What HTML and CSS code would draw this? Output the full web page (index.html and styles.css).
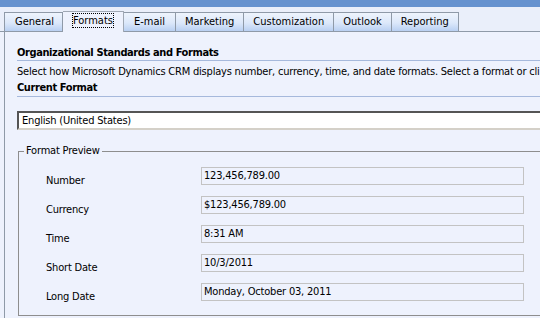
FILE: index.html
```html
<!DOCTYPE html>
<html lang="en">
<head>
    <meta charset="UTF-8">
    <title>System Settings - Formats</title>
    <link rel="stylesheet" href="styles.css">
</head>
<body>
    <div class="topbar"></div>

    <div class="tabstrip">
        <div class="tab">General</div>
        <div class="tab active"><span class="focus">Formats</span></div>
        <div class="tab">E-mail</div>
        <div class="tab">Marketing</div>
        <div class="tab">Customization</div>
        <div class="tab">Outlook</div>
        <div class="tab">Reporting</div>
    </div>

    <div class="content">
        <h3 class="section-title">Organizational Standards and Formats</h3>
        <p class="desc">Select how Microsoft Dynamics CRM displays number, currency, time, and date formats. Select a format or cli</p>
        <h3 class="subsection">Current Format</h3>

        <div class="select">English (United States)</div>

        <fieldset class="preview">
            <legend>Format Preview</legend>
            <div class="rows">
                <div class="label">Number</div>
                <div class="value">123,456,789.00</div>

                <div class="label">Currency</div>
                <div class="value">$123,456,789.00</div>

                <div class="label">Time</div>
                <div class="value">8:31 AM</div>

                <div class="label">Short Date</div>
                <div class="value">10/3/2011</div>

                <div class="label">Long Date</div>
                <div class="value">Monday, October 03, 2011</div>
            </div>
        </fieldset>
    </div>
</body>
</html>
```

FILE: styles.css
```css
:root {
    --bar-color: #6692cf;
    --page-bg: #eef2fd;
    --strip-bg: #eaeffa;
    --rule-color: #a6b9dc;
    --tab-border: #8f9aa8;
    --text-color: #000;
}
html, body {
    margin: 0;
    padding: 0;
    overflow: hidden;
}
body {
    width: 540px;
    height: 318px;
    font-family: 'DejaVu Sans Condensed', 'Liberation Sans', sans-serif;
    font-size: 11px;
    letter-spacing: -0.2px;
    color: var(--text-color);
    background-color: var(--page-bg);
}
.topbar {
    height: 7px;
    background-color: var(--bar-color);
}
.tabstrip {
    display: flex;
    align-items: flex-end;
    height: 24px;
    padding-left: 4px;
    background-color: var(--strip-bg);
    border-bottom: 1px solid var(--tab-border);
}
.tab {
    height: 18px;
    line-height: 17px;
    padding: 0 10px;
    border: 1px solid var(--tab-border);
    border-bottom: none;
    border-left: none;
    background: linear-gradient(#eef4fd, #dce8fa 55%, #b9d0f2);
    text-align: center;
    white-space: nowrap;
    letter-spacing: 0;
}
.tab:first-child {
    border-left: 1px solid var(--tab-border);
    width: 37px;
}
.tab:nth-child(n+4) {
    padding: 0 9px;
}
.tab.active {
    height: 20px;
    margin-bottom: -1px;
    background: var(--page-bg);
    border-color: #a0a8b4;
}
.focus {
    outline: 1px dotted #000;
    outline-offset: 0;
}
.content {
    box-sizing: border-box;
    height: 286px;
    margin-left: 4px;
    border-left: 1px solid var(--tab-border);
    padding: 14px 0 0 12px;
    overflow: hidden;
}
.section-title, .subsection {
    margin: 0;
    font-size: 11px;
    font-weight: bold;
    line-height: 14px;
    letter-spacing: -0.4px;
    white-space: nowrap;
    border-bottom: 1px solid var(--rule-color);
}
.desc {
    margin: 0;
    padding-top: 4px;
    line-height: 14px;
    white-space: nowrap;
    overflow: hidden;
}
.subsection {
    padding: 2px 0 1px;
}
.select {
    margin-top: 14px;
    height: 15px;
    line-height: 15px;
    padding-left: 3px;
    background: #fff;
    border-top: 2px solid #555;
    border-left: 2px solid #555;
    border-bottom: 2px solid #d4d0c8;
    border-right: none;
}
.preview {
    margin: 15px 0 0 1px;
    padding: 10px 0 14px;
    border: 1px solid #8e8e8e;
    border-right: none;
}
.preview legend {
    padding: 0 2px;
    margin-left: 5px;
    line-height: 12px;
}
.rows {
    display: grid;
    grid-template-columns: 155px 323px;
    grid-auto-rows: 18px;
    row-gap: 11px;
    padding-left: 27px;
}
.label {
    padding-top: 5px;
    line-height: 18px;
}
.value {
    box-sizing: border-box;
    height: 18px;
    line-height: 16px;
    padding-left: 2px;
    border: 1px solid #c3c3c3;
}
```
